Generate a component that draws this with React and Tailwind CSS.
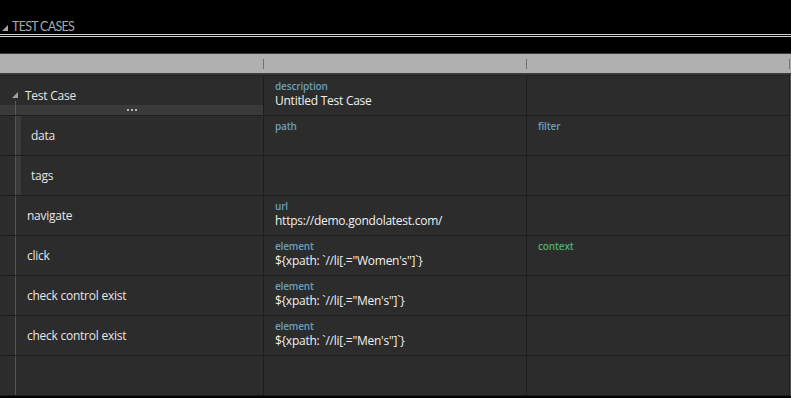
import { Fragment } from 'react';

const rows = [
  { kind: 'root', name: 'Test Case', c2: { label: 'description', value: 'Untitled Test Case' } },
  { kind: 'child', name: 'data', c2: { label: 'path' }, c3: { label: 'filter' } },
  { kind: 'child', name: 'tags' },
  { kind: 'step', name: 'navigate', c2: { label: 'url', value: 'https://demo.gondolatest.com/' } },
  {
    kind: 'step',
    name: 'click',
    c2: { label: 'element', value: '${xpath: `//li[.="Women\'s"]`}' },
    c3: { label: 'context', green: true },
  },
  { kind: 'step', name: 'check control exist', c2: { label: 'element', value: '${xpath: `//li[.="Men\'s"]`}' } },
  { kind: 'step', name: 'check control exist', c2: { label: 'element', value: '${xpath: `//li[.="Men\'s"]`}' } },
  { kind: 'empty' },
];

function ParamCell({ param }) {
  return (
    <div className="h-full w-[263px] pl-[11px] pt-[4px] border-r border-[#1e1e1e]">
      {param && (
        <Fragment>
          <div
            className={`text-[10px] leading-[13px] font-semibold tracking-[-0.15px] ${param.green ? 'text-[#4caf6e]' : 'text-[#6a9fba]'}`}
          >
            {param.label}
          </div>
          {param.value && (
            <div className="text-[12px] leading-[16px] tracking-[-0.25px] text-[#f0f0f0]">{param.value}</div>
          )}
        </Fragment>
      )}
    </div>
  );
}

function NameCell({ row }) {
  return (
    <div className="relative h-full w-[264px] border-r border-[#1e1e1e] flex items-center">
      {row.kind === 'root' ? (
        <Fragment>
          <div className="flex items-center pl-[12px]">
            <svg width="6" height="6" viewBox="0 0 6 6" className="mr-[7px] mb-[2px]">
              <path d="M6 0 L6 6 L0 6 Z" fill="#a0a0a0" />
            </svg>
            <span className="text-[12px] tracking-[-0.25px] text-[#e6e6e6]">{row.name}</span>
          </div>
          <div className="absolute left-0 right-0 bottom-0 h-[10px] bg-[#3a3a3a] flex items-center justify-center gap-[2px]">
            <span className="w-[2px] h-[2px] bg-[#b4b4b4]" />
            <span className="w-[2px] h-[2px] bg-[#b4b4b4]" />
            <span className="w-[2px] h-[2px] bg-[#b4b4b4]" />
          </div>
          <div className="absolute left-[15px] top-[25px] bottom-0 w-px bg-[#5a5a5a]" />
        </Fragment>
      ) : (
        <Fragment>
          <div className="h-full w-[15px] shrink-0" />
          <div className="h-full w-px bg-[#555555] shrink-0" />
          {row.kind === 'child' && <div className="h-full w-[5px] bg-[#3a3a3a] shrink-0" />}
          {row.name && (
            <span
              className={`text-[12px] tracking-[-0.25px] text-[#e6e6e6] ${row.kind === 'child' ? 'pl-[10px]' : 'pl-[11px]'}`}
            >
              {row.name}
            </span>
          )}
        </Fragment>
      )}
    </div>
  );
}

export default function App() {
  return (
    <div className="w-[791px] h-[398px] bg-black overflow-hidden font-['Open_Sans',sans-serif]">
      {/* Section title */}
      <div className="h-[34px] flex items-end pl-[2px]">
        <svg width="6" height="6" viewBox="0 0 6 6" className="mb-[3px] mr-[4px]">
          <path d="M6 0 L6 6 L0 6 Z" fill="#a8a8a8" />
        </svg>
        <span className="font-['Lato',sans-serif] text-[12.5px] leading-[15px] text-[#a8a8a8] tracking-[-0.7px]">
          TEST CASES
        </span>
      </div>
      <div className="h-px bg-[#cfcfcf]" />
      <div className="h-px" />
      <div className="h-px bg-[#cfcfcf]" />
      <div className="h-[16px]" />

      {/* Column header */}
      <div className="h-[22px] bg-[#b0b0b0] border-t border-[#3c3c3c] border-b-2 border-b-[#3a3a3a] flex items-center">
        <div className="w-[263px]" />
        <div className="w-px h-[10px] bg-[#707070]" />
        <div className="w-[262px]" />
        <div className="w-px h-[10px] bg-[#707070]" />
        <div className="w-[262px]" />
        <div className="w-px h-[10px] bg-[#707070]" />
      </div>

      {/* Rows */}
      <div className="bg-[#2c2c2c] w-[791px] border-r border-[#555555] border-b border-b-[#1e1e1e]">
        {rows.map((row, i) => (
          <div key={i} className="h-[40px] flex border-t border-[#1e1e1e]">
            <NameCell row={row} />
            <ParamCell param={row.c2} />
            <ParamCell param={row.c3} />
          </div>
        ))}
      </div>
    </div>
  );
}
